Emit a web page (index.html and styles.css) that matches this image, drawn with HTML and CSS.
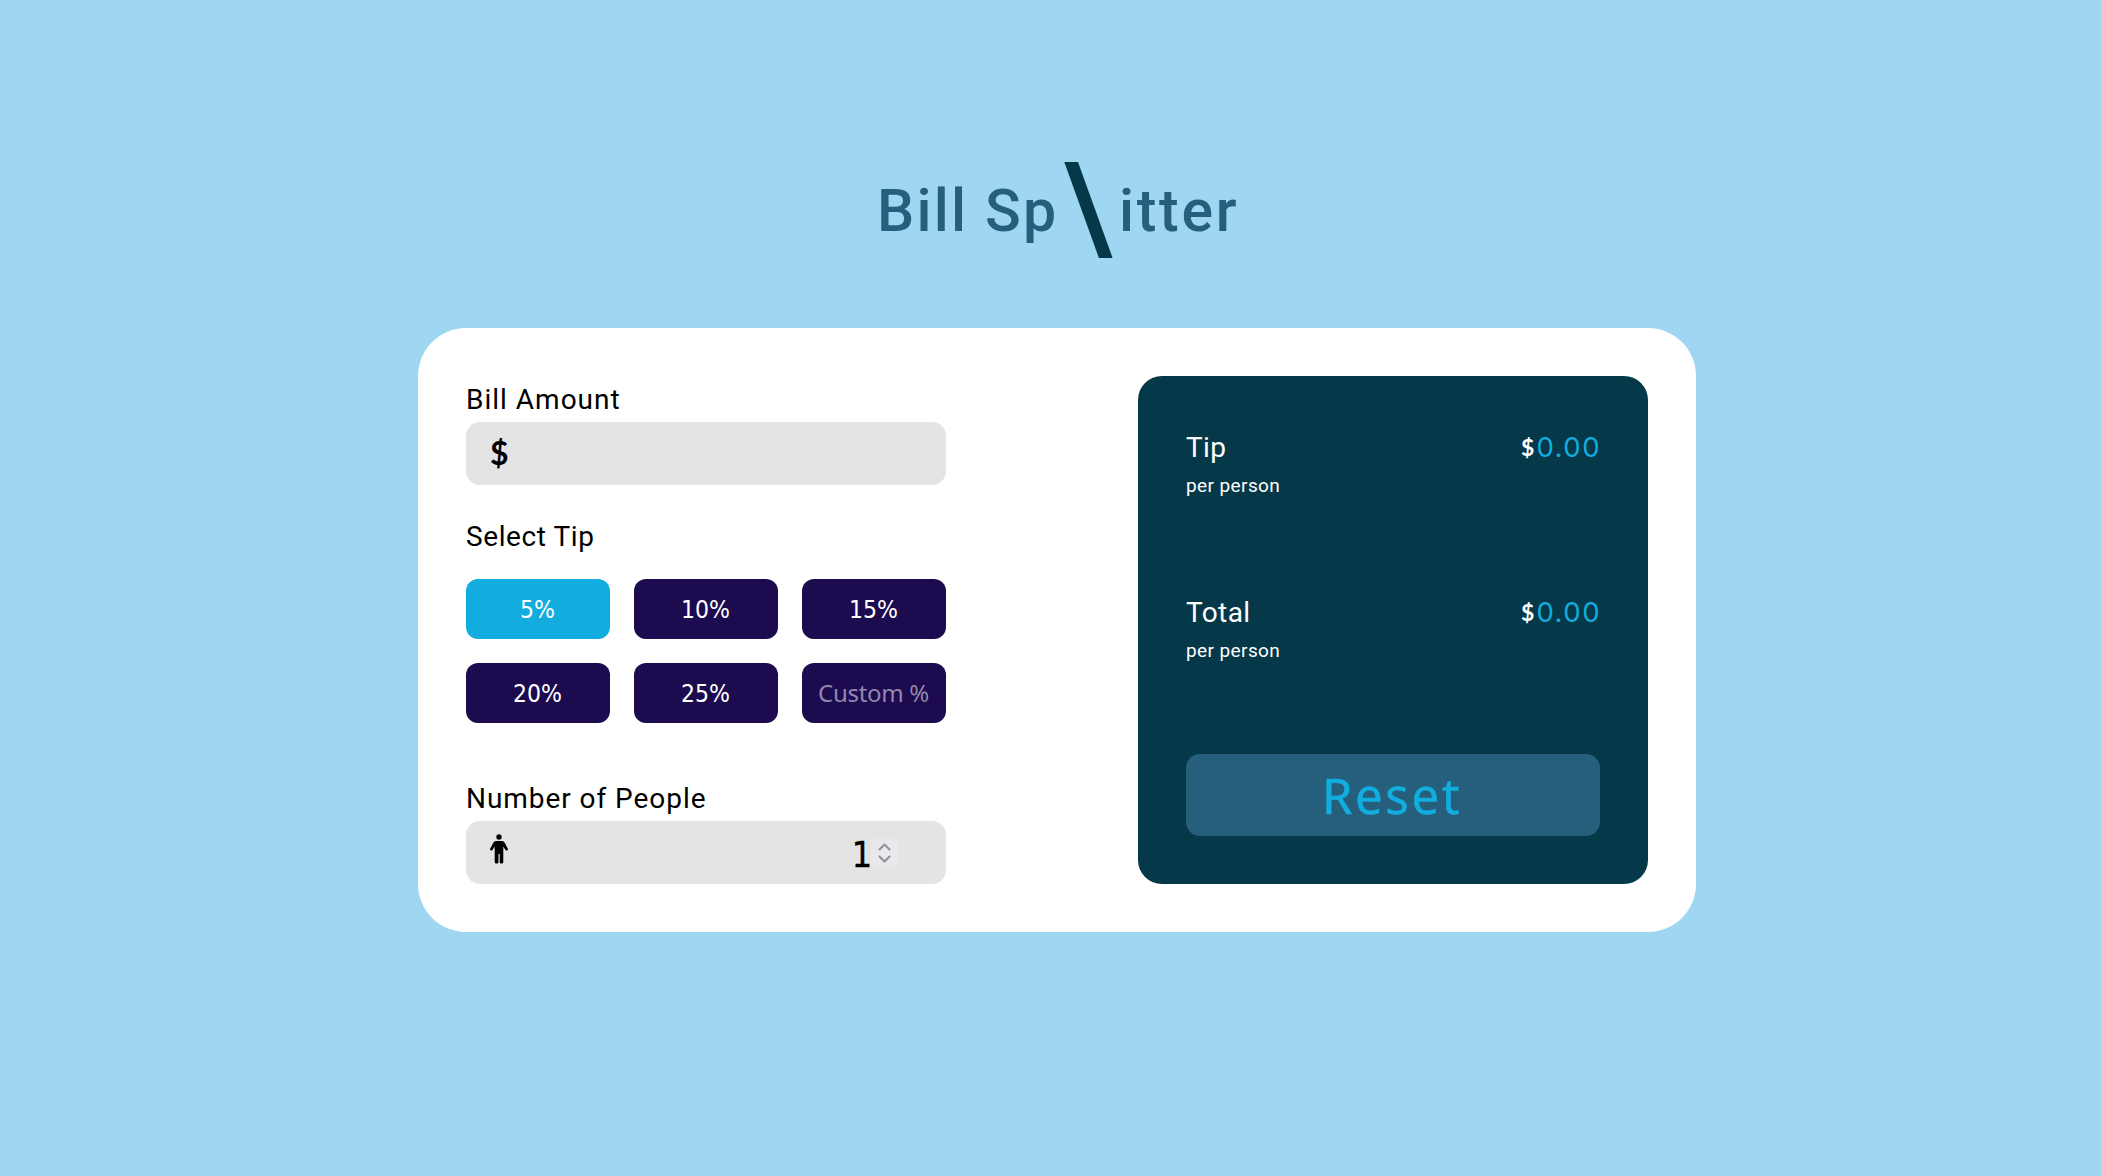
FILE: index.html
```html
<!DOCTYPE html>
<html lang="en">
<head>
<meta charset="utf-8">
<title>Bill Splitter</title>
<link rel="stylesheet" href="styles.css">
</head>
<body>
<h1 class="title"><span class="title-start">Bill Sp</span><span class="slash">\</span><span class="title-end">itter</span></h1>
<main class="card">
  <form class="entry">
    <label class="label bill-label">Bill Amount</label>
    <div class="field"><span class="dollar">$</span></div>
    <div class="label tip-label">Select Tip</div>
    <div class="tips">
      <button type="button" class="tip active">5%</button>
      <button type="button" class="tip">10%</button>
      <button type="button" class="tip">15%</button>
      <button type="button" class="tip">20%</button>
      <button type="button" class="tip">25%</button>
      <button type="button" class="tip custom">Custom %</button>
    </div>
    <label class="label people-label">Number of People</label>
    <div class="field">
      <svg class="person" viewBox="0 0 18 30"><circle cx="9" cy="3" r="2.7"/><path d="M6.2 7h5.6c1.4 0 2.3.7 3 1.9l3 5.6c.7 1.7-1.500 2.9-2.500 1.300l-2-3.300V28c0 2-3.600 2-3.600 0v-8H8.500v8c0 2-3.800 2-3.800 0V12.500l-2 3.300c-1 1.600-3.200.4-2.500-1.300l3-5.600C3.900 7.700 4.800 7 6.200 7z"/></svg>
      <span class="count">1</span>
      <span class="spinner"><svg viewBox="0 0 27 28"><path d="M8.500 10.500 13.500 5.500l5 5M8.500 17.500l5 5 5-5"/></svg></span>
    </div>
  </form>
  <section class="results">
    <div class="result">
      <div><div class="name tip-name">Tip</div><div class="per">per person</div></div>
      <div class="amount"><span class="sign">$</span><span class="value">0.00</span></div>
    </div>
    <div class="result">
      <div><div class="name total-name">Total</div><div class="per">per person</div></div>
      <div class="amount"><span class="sign">$</span><span class="value">0.00</span></div>
    </div>
    <button type="button" class="reset">Reset</button>
  </section>
</main>
</body>
</html>
```
FILE: styles.css
```css
* { box-sizing: border-box; }
body {
  margin: 0;
  min-height: 1176px;
  padding: 149px 0 0 13px;
  background: #9fd7f2;
  font-family: Roboto, "Noto Sans", sans-serif;
  color: #000;
}
.title {
  display: flex;
  height: 179px;
  margin: 0 0 0 864px;
  color: #265f7c;
  font-size: 59px;
  font-weight: 500;
  line-height: 123px;
}
.title-start { width: 183px; letter-spacing: 2.200px; white-space: nowrap; }
.slash {
  width: 59px;
  color: #053848;
  font-size: 124px;
  font-weight: 500;
  line-height: 118px;
  transform: scaleX(.94);
  transform-origin: 54px 50%;
}
.title-end { letter-spacing: 2.700px; }
.card {
  display: flex;
  justify-content: space-between;
  width: 1278px;
  height: 604px;
  margin-left: 405px;
  padding: 48px;
  border-radius: 48px;
  background: #fff;
}
.entry { width: 480px; }
.label {
  display: block;
  height: 46px;
  font-size: 28px;
  line-height: 48px;
  white-space: nowrap;
}
.bill-label { letter-spacing: 1px; }
.tip-label { height: 94px; padding-top: 28px; letter-spacing: .6px; }
.people-label { height: 98px; padding-top: 52px; letter-spacing: .95px; }
.field {
  display: flex;
  height: 63px;
  padding: 0 48px 0 24px;
  border-radius: 14px;
  background: #e4e4e4;
}
.dollar { font: 700 32px/62px Lato, sans-serif; }
.person { width: 18px; height: 30px; margin-top: 13px; }
.count {
  margin: 0 -1px 0 auto;
  font: 35.500px/67px "DejaVu Sans Condensed", "DejaVu Sans", sans-serif;
  font-stretch: condensed;
  -webkit-text-stroke: .4px #000;
}
.spinner { width: 27px; height: 28px; margin-top: 18px; background: #e9e9ed; }
.spinner svg { display: block; fill: none; stroke: #8f8f9d; stroke-width: 2; stroke-linecap: round; stroke-linejoin: round; }
.tips {
  display: grid;
  grid-template-columns: repeat(3, 144px);
  grid-auto-rows: 60px;
  gap: 24px;
}
.tip {
  padding: 0 1px 0 0;
  border: 0;
  border-radius: 12px;
  background: #1c0b4f;
  color: #fff;
  font: 24.500px "DejaVu Sans Condensed", "DejaVu Sans", sans-serif;
  font-stretch: condensed;
}
.active { background: #12acde; }
.custom { padding: 0 1px 1px 0; color: #9387ad; font: 24px "Noto Sans", sans-serif; letter-spacing: -.3px; }
.results {
  width: 510px;
  padding: 48px;
  border-radius: 24px;
  background: #053848;
  color: #fff;
}
.result { display: flex; justify-content: space-between; height: 165px; }
.name { font-size: 28px; line-height: 48px; letter-spacing: .4px; }
.per { font-size: 19px; line-height: 28px; letter-spacing: .4px; }
.amount { display: flex; }
.sign { margin-right: 2px; font: 700 23px/47px Lato, sans-serif; }
.value { margin-right: -1px; color: #12acde; font: 27.500px/47px Inter, sans-serif; letter-spacing: 1.500px; }
.reset {
  display: block;
  width: 414px;
  height: 82px;
  padding: 0 2px 0 0;
  border: 0;
  border-radius: 14px;
  background: #265f7c;
  color: #12acde;
  font: 49px "Noto Sans", sans-serif;
  letter-spacing: 2.600px;
  -webkit-text-stroke: .5px #12acde;
}
```
